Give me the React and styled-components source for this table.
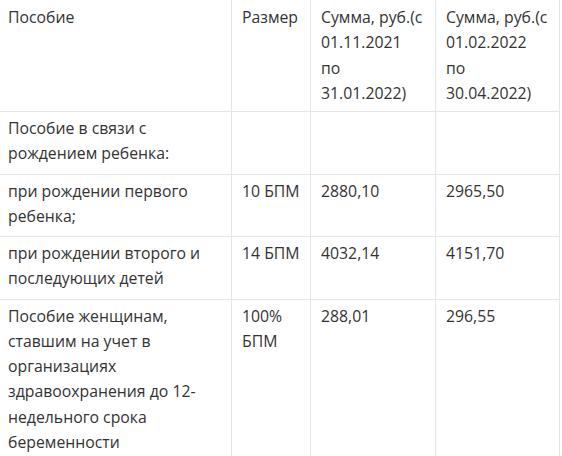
import styled, { createGlobalStyle } from "styled-components";

const GlobalStyle = createGlobalStyle`
  body {
    margin: 0;
    background: #fff;
    font-family: "Open Sans", "Liberation Sans", sans-serif;
  }
`;

const Wrapper = styled.div`
  width: 562px;
  height: 456px;
  overflow: hidden;
`;

const Table = styled.table`
  border-collapse: collapse;
  table-layout: fixed;
  width: 563px;
  margin-left: -3px;
  color: #333;
  font-size: 15.8px;
  line-height: 1.6;
`;

const Cell = styled.td`
  border: 1px solid #e6e6e6;
  padding: 4px 10px 7px;
  vertical-align: top;
  text-align: left;
  font-weight: 400;
`;

const HeadCell = styled(Cell).attrs({ as: "th" })`
  border-top: none;
  padding-top: 5px;
  padding-bottom: 5px;
`;

const Line = styled.span`
  display: block;
`;

const columns = [234, 79, 125, 124];

const header = [
  ["Пособие"],
  ["Размер"],
  ["Сумма, руб.(с", "01.11.2021", "по", "31.01.2022)"],
  ["Сумма, руб.(с", "01.02.2022", "по", "30.04.2022)"],
];

const rows = [
  ["Пособие в связи с рождением ребенка:", "", "", ""],
  ["при рождении первого ребенка;", "10 БПМ", "2880,10", "2965,50"],
  ["при рождении второго и последующих детей", "14 БПМ", "4032,14", "4151,70"],
  [
    "Пособие женщинам, ставшим на учет в организациях здравоохранения до 12-недельного срока беременности",
    "100% БПМ",
    "288,01",
    "296,55",
  ],
];

export default function App() {
  return (
    <Wrapper>
      <GlobalStyle />
      <Table>
        <colgroup>
          {columns.map((w, i) => (
            <col key={i} style={{ width: w }} />
          ))}
        </colgroup>
        <thead>
          <tr>
            {header.map((lines, i) => (
              <HeadCell key={i}>
                {lines.map((l, k) => (
                  <Line key={k}>{l}</Line>
                ))}
              </HeadCell>
            ))}
          </tr>
        </thead>
        <tbody>
          {rows.map((r, i) => (
            <tr key={i}>
              {r.map((c, j) => (
                <Cell key={j}>{c}</Cell>
              ))}
            </tr>
          ))}
        </tbody>
      </Table>
    </Wrapper>
  );
}
